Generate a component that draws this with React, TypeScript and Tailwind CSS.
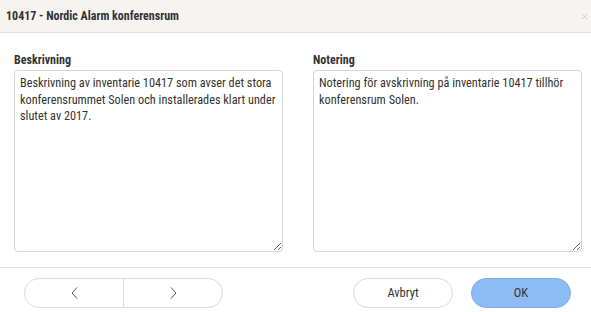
import { X } from 'lucide-react';

const desc =
  'Beskrivning av inventarie 10417 som avser det stora konferensrummet Solen och installerades klart under slutet av 2017.';
const note = 'Notering för avskrivning på inventarie 10417 tillhör konferensrum Solen.';

function Field({ label, value }: { label: string; value: string }) {
  return (
    <div className="flex flex-col">
      <label className="text-[12px] font-bold leading-[16px] text-[#333] mb-[2px]">{label}</label>
      <textarea
        defaultValue={value}
        className="h-[182px] w-full rounded-[4px] border border-[#d6d6d6] pl-[5px] pr-[2px] py-[4px] font-['Roboto_Condensed','Roboto',sans-serif] font-stretch-condensed text-[12.25px] leading-[16.5px] text-[#333] outline-none resize-y"
      />
    </div>
  );
}

function Chevron({ dir }: { dir: 'left' | 'right' }) {
  return (
    <svg width="7" height="12" viewBox="0 0 7 12" className="text-[#555]">
      <polyline
        points={dir === 'left' ? '6,0.5 1,6 6,11.5' : '1,0.5 6,6 1,11.5'}
        fill="none"
        stroke="currentColor"
        strokeWidth="1"
      />
    </svg>
  );
}

export default function App() {
  return (
    <div className="w-[591px] h-[312px] bg-white font-['Roboto_Condensed','Roboto',sans-serif] font-stretch-condensed overflow-hidden">
      <div className="h-[33px] bg-[#f5f4f1] border-b border-[#e2e1dd] flex items-center justify-between pl-[6px] pr-[2px]">
        <div className="text-[12px] font-bold text-[#333]">10417 - Nordic Alarm konferensrum</div>
        <X size={9} strokeWidth={2} className="text-[#c4c4c4]" />
      </div>
      <div className="grid grid-cols-2 gap-[30px] pl-[14px] pr-[9px] pt-[19px] pb-[15px]">
        <Field label="Beskrivning" value={desc} />
        <Field label="Notering" value={note} />
      </div>
      <div className="border-t border-[#e4e4e4] flex items-center justify-between pl-[24px] pr-[20px] pt-[10px]">
        <div className="flex h-[30px] w-[199px] rounded-full border border-[#dcdcdc] overflow-hidden">
          <button className="flex-1 flex items-center justify-center border-r border-[#dcdcdc]">
            <Chevron dir="left" />
          </button>
          <button className="flex-1 flex items-center justify-center">
            <Chevron dir="right" />
          </button>
        </div>
        <div className="flex gap-[18px]">
          <button className="h-[30px] w-[100px] rounded-full border border-[#dcdcdc] bg-white text-[12.5px] text-[#333]">
            Avbryt
          </button>
          <button className="h-[30px] w-[100px] rounded-full border border-[#7aaeea] bg-[#8dbcf4] text-[12.5px] text-[#333]">
            OK
          </button>
        </div>
      </div>
    </div>
  );
}
